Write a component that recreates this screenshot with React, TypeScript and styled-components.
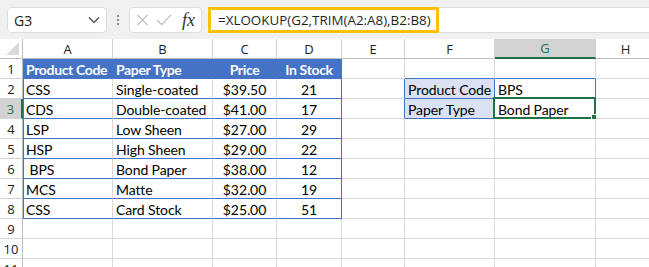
import styled, { createGlobalStyle } from 'styled-components'

const GlobalStyle = createGlobalStyle`
    html, body {
        margin: 0;
        padding: 0;
        background: #ffffff;
    }
`

const BLUE = '#4472c4'
const GRID = '#d9d9d9'
const GREEN = '#217346'

const Page = styled('div')`
    width: 649px;
    height: 267px;
    overflow: hidden;
    background: #ffffff;
    font-family: Lato, 'Liberation Sans', sans-serif;
`

const Toolbar = styled('div')`
    height: 39px;
    box-sizing: border-box;
    padding: 7px 0 6px 7px;
    display: flex;
    align-items: stretch;
    background: #f0f0f0;
`

const NameBox = styled('div')`
    width: 100px;
    box-sizing: border-box;
    border: 1px solid #dedede;
    border-radius: 4px;
    background: #ffffff;
    display: flex;
    align-items: center;
    justify-content: space-between;
    padding: 0 6px 0 6px;
    font-family: 'Open Sans', sans-serif;
    font-size: 14px;
    color: #222;
`

const Dots = styled('div')`
    width: 22px;
    display: flex;
    flex-direction: column;
    align-items: center;
    justify-content: center;
    gap: 2px;

    span {
        width: 2px;
        height: 2px;
        background: #8a8a8a;
    }
`

const FuncBox = styled('div')`
    width: 73px;
    box-sizing: border-box;
    border: 1px solid #dedede;
    border-radius: 4px;
    background: #ffffff;
    display: flex;
    align-items: center;
    padding: 0 6px 0 6px;
    gap: 7px;
`

const Fx = styled('span')`
    font-family: 'Liberation Serif', serif;
    font-style: italic;
    font-size: 18px;
    color: #333;
    margin-left: 3px;
`

const FormulaBar = styled('div')`
    flex: 1;
    margin-left: 6px;
    background: #ffffff;
    border-top: 1px solid #dcdcdc;
    border-bottom: 1px solid #dcdcdc;
    position: relative;
    display: flex;
    align-items: center;
`

const Highlight = styled('div')`
    position: absolute;
    left: 0;
    top: -1px;
    width: 231px;
    bottom: -1px;
    box-sizing: border-box;
    border: 3px solid #ffc000;
`

const FormulaText = styled('span')`
    padding-left: 10px;
    font-family: 'Open Sans', sans-serif;
    font-size: 13.4px;
    color: #1f1f1f;
`

const Sheet = styled('div')`
    display: grid;
    grid-template-columns: 23px 90px 100px 64px 65px 63px 90px 101px 60px;
    grid-auto-rows: 20px;
`

const Corner = styled('div')`
    border-right: 1px solid #bdbdbd;
    border-bottom: 1px solid #bdbdbd;
    position: relative;

    &::after {
        content: '';
        position: absolute;
        right: 3px;
        bottom: 3px;
        border-style: solid;
        border-width: 0 0 13px 13px;
        border-color: transparent transparent #dadada transparent;
    }
`

const ColHead = styled('div')<{ $active?: boolean }>`
    display: flex;
    align-items: center;
    justify-content: center;
    background: ${p => (p.$active ? '#d2d2d2' : '#ffffff')};
    color: ${p => (p.$active ? GREEN : '#222')};
    border-right: 1px solid #d4d4d4;
    border-bottom: ${p => (p.$active ? `2px solid ${GREEN}` : '1px solid #bdbdbd')};
    font-family: 'Open Sans', sans-serif;
    font-size: 13px;
`

const RowHead = styled('div')<{ $active?: boolean }>`
    display: flex;
    align-items: center;
    justify-content: center;
    background: ${p => (p.$active ? '#d2d2d2' : '#ffffff')};
    color: ${p => (p.$active ? GREEN : '#222')};
    border-bottom: 1px solid #d4d4d4;
    border-right: ${p => (p.$active ? `2px solid ${GREEN}` : '1px solid #bdbdbd')};
    font-family: 'Open Sans', sans-serif;
    font-size: 13px;
`

type CellProps = {
    $fill?: string
    $bold?: boolean
    $light?: boolean
    $center?: boolean
    $right?: string
    $bottom?: string
    $left?: string
}

const Cell = styled('div')<CellProps>`
    position: relative;
    display: flex;
    align-items: center;
    justify-content: ${p => (p.$center ? 'center' : 'flex-start')};
    padding: 1px 3px 0 3px;
    overflow: visible;
    white-space: pre;
    background: ${p => p.$fill || '#ffffff'};
    color: ${p => (p.$light ? '#ffffff' : '#000000')};
    font-weight: ${p => (p.$bold ? 700 : 400)};
    letter-spacing: ${p => (p.$bold ? '-0.35px' : '-0.1px')};
    font-size: 14px;
    border-right: 1px solid ${p => p.$right || GRID};
    border-bottom: 1px solid ${p => p.$bottom || GRID};
    box-shadow: ${p => (p.$left ? `inset 1px 0 0 ${p.$left}` : 'none')};
`

const Selection = styled('div')`
    position: absolute;
    left: -2px;
    top: -2px;
    right: -1px;
    bottom: -1px;
    border: 2px solid ${GREEN};
    pointer-events: none;

    &::after {
        content: '';
        position: absolute;
        right: -4px;
        bottom: -4px;
        width: 5px;
        height: 5px;
        background: ${GREEN};
        border: 1px solid #ffffff;
    }
`

const columns = ['A', 'B', 'C', 'D', 'E', 'F', 'G', 'H']

const products = [
    ['CSS', 'Single-coated', '$39.50', '21'],
    ['CDS', 'Double-coated', '$41.00', '17'],
    ['LSP', 'Low Sheen', '$27.00', '29'],
    ['HSP', 'High Sheen', '$29.00', '22'],
    [' BPS', 'Bond Paper', '$38.00', '12'],
    ['MCS', 'Matte', '$32.00', '19'],
    ['CSS', 'Card Stock', '$25.00', '51'],
]

const lookup: Record<number, [string, string]> = {
    2: ['Product Code', 'BPS'],
    3: ['Paper Type', 'Bond Paper'],
}

function ChevronDown() {
    return (
        <svg width="12" height="8" viewBox="0 0 12 8">
            <path d="M1 1.5 L6 6.5 L11 1.5" fill="none" stroke="#444" strokeWidth="1.2" />
        </svg>
    )
}

function CrossIcon() {
    return (
        <svg width="14" height="14" viewBox="0 0 14 14">
            <path d="M1.5 1.5 L12.5 12.5 M12.5 1.5 L1.5 12.5" stroke="#b8b8b8" strokeWidth="1.2" />
        </svg>
    )
}

function CheckIcon() {
    return (
        <svg width="17" height="14" viewBox="0 0 17 14">
            <path d="M1 7 L6 12 L16 1.5" fill="none" stroke="#b8b8b8" strokeWidth="1.2" />
        </svg>
    )
}

function Row({ n }: { n: number }) {
    const header = n === 1
    const data = n >= 2 && n <= 8 ? products[n - 2] : null
    const inTable = n <= 8
    const look = lookup[n]

    const tableCell = (value: string, col: number) => (
        <Cell
            key={col}
            $fill={header ? BLUE : undefined}
            $light={header}
            $bold={header}
            $center={col >= 2}
            $bottom={BLUE}
            $right={header || col === 3 ? BLUE : undefined}
            $left={col === 0 ? BLUE : undefined}
        >
            {value}
        </Cell>
    )

    const firstFour = header ? ['Product Code', 'Paper Type', 'Price', 'In Stock'] : data

    return (
        <>
            <RowHead $active={n === 3}>{n}</RowHead>
            {inTable && firstFour
                ? firstFour.map((v, i) => tableCell(v, i))
                : [0, 1, 2, 3].map(i => <Cell key={i} />)}
            <Cell $right={look ? BLUE : undefined} />
            <Cell
                $fill={look ? '#d9e1f2' : undefined}
                $right={look ? BLUE : undefined}
                $bottom={look || n === 1 ? BLUE : undefined}
            >
                {look ? look[0] : ''}
            </Cell>
            <Cell $right={look ? BLUE : undefined} $bottom={look || n === 1 ? BLUE : undefined}>
                {look ? look[1] : ''}
                {n === 3 && <Selection />}
            </Cell>
            <Cell />
        </>
    )
}

export default function App() {
    return (
        <Page>
            <GlobalStyle />
            <Toolbar>
                <NameBox>
                    G3
                    <ChevronDown />
                </NameBox>
                <Dots>
                    <span />
                    <span />
                    <span />
                </Dots>
                <FuncBox>
                    <CrossIcon />
                    <CheckIcon />
                    <Fx>fx</Fx>
                </FuncBox>
                <FormulaBar>
                    <FormulaText>=XLOOKUP(G2,TRIM(A2:A8),B2:B8)</FormulaText>
                    <Highlight />
                </FormulaBar>
            </Toolbar>
            <Sheet>
                <Corner />
                {columns.map(c => (
                    <ColHead key={c} $active={c === 'G'}>
                        {c}
                    </ColHead>
                ))}
                {Array.from({ length: 11 }, (_, i) => (
                    <Row key={i} n={i + 1} />
                ))}
            </Sheet>
        </Page>
    )
}
